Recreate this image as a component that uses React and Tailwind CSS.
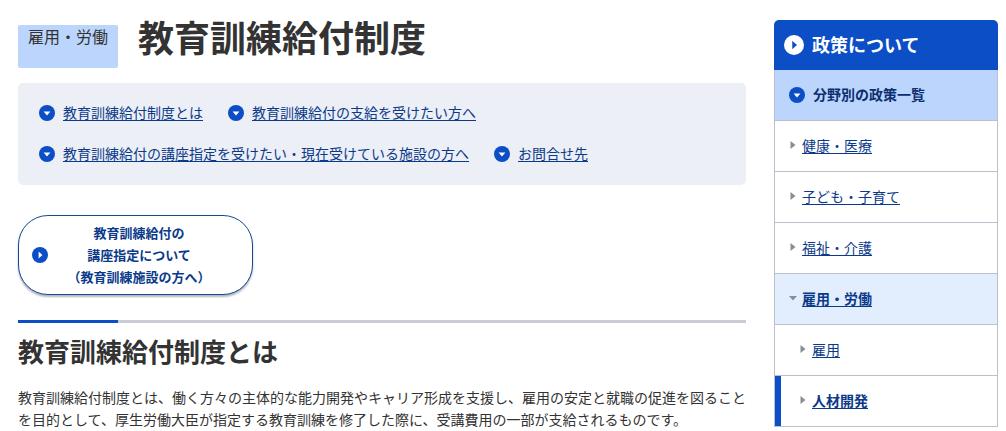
const jp = '"Noto Sans CJK JP", "Noto Sans", sans-serif'

// 丸に三角のアイコン(direction: right / down)
function CircleArrow({ down = false, size = 16, bg = "#0b4ec6", fg = "#ffffff" }) {
  return (
    <svg width={size} height={size} viewBox="0 0 16 16" className="shrink-0">
      <circle cx="8" cy="8" r="8" fill={bg} />
      {down ? <path d="M4.6 6.6h6.8L8 10.4z" fill={fg} /> : <path d="M6.6 4.6v6.8L10.4 8z" fill={fg} />}
    </svg>
  )
}

function SmallArrow({ down = false }) {
  return (
    <svg width="8" height="10" viewBox="0 0 8 10" className="shrink-0">
      {down ? <path d="M0 3h8L4 7.5z" fill="#8a8d94" /> : <path d="M1.5 1v8L6.5 5z" fill="#8a8d94" />}
    </svg>
  )
}

const anchors = [
  "教育訓練給付制度とは",
  "教育訓練給付の支給を受けたい方へ",
  "教育訓練給付の講座指定を受けたい・現在受けている施設の方へ",
  "お問合せ先",
]

const sideItems = [
  { name: "健康・医療" },
  { name: "子ども・子育て" },
  { name: "福祉・介護" },
  { name: "雇用・労働", open: true },
  { name: "雇用", sub: true },
  { name: "人材開発", sub: true, current: true },
]

export default function App() {
  return (
    <div className="flex h-[431px] gap-[28px] overflow-hidden bg-white pl-[18px] text-[#333333]" style={{ fontFamily: jp }}>
      <main className="w-[728px] shrink-0">
        <div className="flex h-[83px] items-start gap-[20px]">
          <span className="mt-[25px] h-[43px] w-[100px] rounded-[2px] bg-[#bbd5fd] px-[10px] text-[16px] leading-[22px]">
            雇用・労働
          </span>
          <h1 className="mt-[12px] text-[36px] leading-[48px] font-bold">教育訓練給付制度</h1>
        </div>

        <div className="flex h-[102px] flex-wrap content-start gap-x-[25px] gap-y-[19px] rounded-[5px] bg-[#eceff5] px-[21px] pt-[19px]">
          {anchors.map((text) => (
            <a key={text} href="#" className="flex h-[22px] items-center gap-[8px] text-[14px] text-[#0b3a8a]">
              <CircleArrow down />
              <span className="pb-[2px] underline underline-offset-2">{text}</span>
            </a>
          ))}
        </div>

        <a
          href="#"
          className="mt-[30px] flex h-[80px] w-[235px] items-center rounded-[30px] border border-[#16488f] bg-white pl-[13px] text-[13px] leading-[22px] font-bold text-[#0b3a8a] shadow-[0_2px_2px_rgba(60,70,100,0.4)]"
        >
          <CircleArrow />
          <span className="flex-1 pr-[22px] text-center">
            教育訓練給付の
            <br />
            講座指定について
            <br />
            （教育訓練施設の方へ）
          </span>
        </a>

        <div className="mt-[25px] h-[3px] bg-[#c9ccd6]">
          <div className="h-[3px] w-[100px] bg-[#0b4ec6]" />
        </div>
        <h2 className="mt-[8px] text-[26px] leading-[40px] font-bold">教育訓練給付制度とは</h2>
        <p className="mt-[15px] text-[14px] leading-[22px]">
          教育訓練給付制度とは、働く方々の主体的な能力開発やキャリア形成を支援し、雇用の安定と就職の促進を図ることを目的として、厚生労働大臣が指定する教育訓練を修了した際に、受講費用の一部が支給されるものです。
        </p>
      </main>

      <aside className="mt-[20px] w-[224px] shrink-0">
        <div className="flex h-[50px] items-center gap-[8px] rounded-t-[5px] bg-[#0b4ec6] pl-[10px] text-[18px] font-bold text-white">
          <CircleArrow size={20} bg="#ffffff" fg="#0b4ec6" />
          <span className="pb-[2px]">政策について</span>
        </div>
        <div className="flex h-[51px] items-center gap-[8px] border-x border-b border-[#bcc0cc] bg-[#bbd5fd] pl-[14px] text-[14px] font-bold text-[#0b2f70]">
          <CircleArrow down />
          <span className="pb-[2px]">分野別の政策一覧</span>
        </div>
        {sideItems.map((item) => (
          <div
            key={item.name}
            className={`flex h-[51px] items-center gap-[5px] border-x border-b border-[#bcc0cc] pb-[2px] ${item.open ? "bg-[#e2eefd]" : "bg-white"} ${item.sub ? "pl-[24px]" : "pl-[14px]"} ${item.current ? "shadow-[inset_6px_0_0_#0b4ec6]" : ""}`}
          >
            <SmallArrow down={item.open} />
            <a
              href="#"
              className={`text-[14px] text-[#0b3a8a] underline underline-offset-2 ${item.open || item.current ? "font-bold" : ""}`}
            >
              {item.name}
            </a>
          </div>
        ))}
      </aside>
    </div>
  )
}
